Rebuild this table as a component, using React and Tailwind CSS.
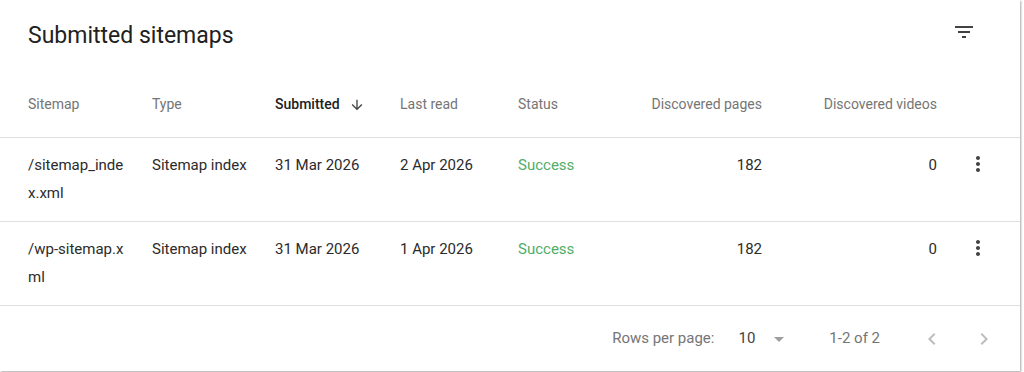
import React from 'react';

const rows = [
  { sitemap: '/sitemap_index.xml', type: 'Sitemap index', submitted: '31 Mar 2026', lastRead: '2 Apr 2026', status: 'Success', pages: 182, videos: 0 },
  { sitemap: '/wp-sitemap.xml', type: 'Sitemap index', submitted: '31 Mar 2026', lastRead: '1 Apr 2026', status: 'Success', pages: 182, videos: 0 },
];

function Icon({ d, size = 24, className = '' }) {
  return (
    <svg width={size} height={size} viewBox="0 0 24 24" className={className} fill="currentColor">
      <path d={d} />
    </svg>
  );
}

export default function App() {
  return (
    <div className="w-[1024px] h-[372px] bg-white overflow-hidden" style={{ fontFamily: 'Roboto, "Liberation Sans", sans-serif' }}>
      <div className="w-[1020px] h-[371px] bg-white shadow-[1px_1px_2px_rgba(0,0,0,0.35)] flex flex-col">
        <div className="h-[70px] flex items-center justify-between pl-[28px] pr-[44px]">
          <h2 className="text-[23px] text-[#212121] mt-[3px]">Submitted sitemaps</h2>
          <Icon d="M10 18h4v-2h-4v2zM3 6v2h18V6H3zm3 7h12v-2H6v2z" className="text-[#424242] mb-[6px]" />
        </div>

        <div className="h-[68px] flex items-center pl-[28px] pt-[2px] text-[14px] text-[#757575] border-b border-[#e0e0e0]">
          <div className="w-[124px]">Sitemap</div>
          <div className="w-[123px]">Type</div>
          <div className="w-[125px] flex items-center gap-[9px] text-[#212121] font-medium">
            Submitted
            <Icon d="M20 12l-1.41-1.41L13 16.17V4h-2v12.17l-5.58-5.59L4 12l8 8 8-8z" size={16} className="text-[#424242]" />
          </div>
          <div className="w-[118px]">Last read</div>
          <div className="w-[244px] flex">
            <span>Status</span>
            <span className="ml-auto">Discovered pages</span>
          </div>
          <div className="w-[175px] text-right">Discovered videos</div>
        </div>

        {rows.map((r) => (
          <div key={r.sitemap} className="h-[84px] flex items-start pl-[28px] pt-[13px] text-[15px] leading-[28px] text-[#2b2b2b] border-b border-[#e0e0e0]">
            <div className="w-[124px] pr-[24px] break-all">{r.sitemap}</div>
            <div className="w-[123px]">{r.type}</div>
            <div className="w-[125px]">{r.submitted}</div>
            <div className="w-[118px]">{r.lastRead}</div>
            <div className="w-[244px] flex">
              <span className="text-[#4fae67]">{r.status}</span>
              <span className="ml-auto">{r.pages}</span>
            </div>
            <div className="w-[175px] text-right">{r.videos}</div>
            <div className="w-[82px] flex justify-center pt-[1px]">
              <Icon d="M12 8c1.1 0 2-.9 2-2s-.9-2-2-2-2 .9-2 2 .9 2 2 2zm0 2c-1.1 0-2 .9-2 2s.9 2 2 2 2-.9 2-2-.9-2-2-2zm0 6c-1.1 0-2 .9-2 2s.9 2 2 2 2-.9 2-2-.9-2-2-2z" className="text-[#424242]" />
            </div>
          </div>
        ))}

        <div className="flex-1 flex items-center justify-end pr-[24px] text-[15px] text-[#757575]">
          <span>Rows per page:</span>
          <span className="ml-[24px] text-[#424242]">10</span>
          <Icon d="M7 10l5 5 5-5z" className="ml-[12px] text-[#9e9e9e]" />
          <span className="ml-[38px]">1-2 of 2</span>
          <Icon d="M15.41 7.41L14 6l-6 6 6 6 1.41-1.41L10.83 12z" className="ml-[40px] text-[#bdbdbd]" />
          <Icon d="M10 6L8.59 7.41 13.17 12l-4.58 4.59L10 18l6-6z" className="ml-[28px] text-[#bdbdbd]" />
        </div>
      </div>
    </div>
  );
}
